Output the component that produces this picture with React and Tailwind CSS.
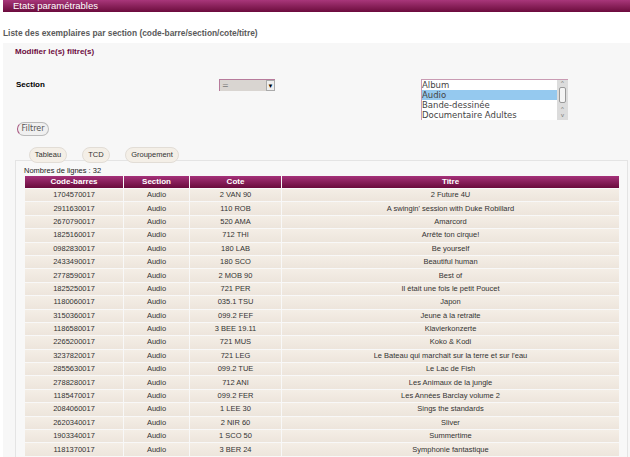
import React from 'react'

const rows = [
  ['1704570017', 'Audio', '2 VAN 90', '2 Future 4U'],
  ['2911630017', 'Audio', '110 ROB', "A swingin' session with Duke Robillard"],
  ['2670790017', 'Audio', '520 AMA', 'Amarcord'],
  ['1825160017', 'Audio', '712 THI', 'Arrête ton cirque!'],
  ['0982830017', 'Audio', '180 LAB', 'Be yourself'],
  ['2433490017', 'Audio', '180 SCO', 'Beautiful human'],
  ['2778590017', 'Audio', '2 MOB 90', 'Best of'],
  ['1825250017', 'Audio', '721 PER', 'Il était une fois le petit Poucet'],
  ['1180060017', 'Audio', '035.1 TSU', 'Japon'],
  ['3150360017', 'Audio', '099.2 FEF', 'Jeune à la retraite'],
  ['1186580017', 'Audio', '3 BEE 19.11', 'Klavierkonzerte'],
  ['2265200017', 'Audio', '721 MUS', 'Koko & Kodi'],
  ['3237820017', 'Audio', '721 LEG', "Le Bateau qui marchait sur la terre et sur l'eau"],
  ['2855630017', 'Audio', '099.2 TUE', 'Le Lac de Fish'],
  ['2788280017', 'Audio', '712 ANI', 'Les Animaux de la jungle'],
  ['1185470017', 'Audio', '099.2 FER', 'Les Années Barclay volume 2'],
  ['2084060017', 'Audio', '1 LEE 30', 'Sings the standards'],
  ['2620340017', 'Audio', '2 NIR 60', 'Sliver'],
  ['1903340017', 'Audio', '1 SCO 50', 'Summertime'],
  ['1181370017', 'Audio', '3 BER 24', 'Symphonie fantastique'],
]

const sections = ['Album', 'Audio', 'Bande-dessinée', 'Documentaire Adultes']

const tabs = [
  { label: 'Tableau', w: 'w-[38px]' },
  { label: 'TCD', w: 'w-[28px]' },
  { label: 'Groupement', w: 'w-[54px]' },
]

const App = () => {
  return (
    <div className="w-[630px] h-[457px] overflow-hidden bg-white pl-[3px] font-['Liberation_Sans',Arial,sans-serif]">
      {/* Title bar */}
      <div className="h-[12px] bg-gradient-to-b from-[#a8367a] to-[#6c0a3d] pl-[10px] text-[9.5px] leading-[12px] text-white">
        Etats paramétrables
      </div>

      <div className="mt-[16px] h-[15px] text-[8.4px] font-bold leading-[10px] text-[#5a5a5a]">
        Liste des exemplaires par section (code-barre/section/cote/titre)
      </div>

      {/* Filter panel */}
      <div className="bg-[#f7f7f7] pt-[4px]">
        <div className="pl-[12px] text-[8px] font-bold leading-[10px] text-[#6c0a3d]">
          Modifier le(s) filtre(s)
        </div>

        <div className="mt-[22px] flex items-start">
          <div className="w-[216px] pl-[13px] pt-[1px] text-[8px] font-bold leading-[10px] text-black">Section</div>
          <div className="flex h-[12px] w-[56px] border-l border-t border-[#b77b9b] bg-[#d9d5d1]">
            <span className="flex-1 pl-[2px] font-['DejaVu_Sans',sans-serif] text-[8px] leading-[11px] text-[#777]">=</span>
            <span className="flex w-[9px] items-center justify-center border border-[#aaa] bg-[#eee] text-[6px] leading-none text-black">▼</span>
          </div>
          <div className="ml-[146px] flex h-[41px] w-[147px] border-t border-l border-[#c99bb3] bg-white">
            <div className="flex-1">
              {sections.map((s) => (
                <div
                  key={s}
                  className={`h-[10px] font-['DejaVu_Sans',sans-serif] text-[8.5px] leading-[10px] text-[#444] ${s === 'Audio' ? 'bg-[#95c9ef]' : ''}`}
                >
                  {s}
                </div>
              ))}
            </div>
            <div className="flex w-[11px] flex-col items-center bg-[#dcdcdc] text-[6px] leading-[6px] text-[#777]">
              <span>^</span>
              <div className="mt-[1px] h-[16px] w-[7px] rounded-[2px] border border-[#999] bg-[#f4f4f4]" />
              <span className="mt-[3px]">^</span>
              <span>v</span>
            </div>
          </div>
        </div>

        <div className="mt-[2px] pl-[14px]">
          <div className="flex h-[14px] w-[32px] items-center justify-center rounded-full border border-[#bbb] border-l-[#a8557f] bg-[#f0f0f0] font-['DejaVu_Sans',sans-serif] text-[8px] text-[#555]">
            Filtrer
          </div>
        </div>

        {/* Tabs */}
        <div className="mt-[11px] flex gap-[15px] pl-[26px]">
          {tabs.map((t) => (
            <div
              key={t.label}
              className={`${t.w} flex h-[16px] items-center justify-center rounded-[8px] border border-[#e2ddd6] bg-[#f4efe7] text-[7.5px] text-[#333]`}
            >
              {t.label}
            </div>
          ))}
        </div>

        {/* Result box */}
        <div className="-mt-[3px] ml-[12px] w-[613px] border border-[#e4e4e4] bg-[#f8f8f8] pl-[8px] pt-[5px]">
          <div className="text-[7.5px] leading-[9px] text-[#222]">Nombres de lignes : 32</div>
          <table className="border-separate border-spacing-x-[1px] border-spacing-y-[1px] text-[7.5px] text-[#333]">
            <thead>
              <tr>
                {['Code-barres', 'Section', 'Cote', 'Titre'].map((h, i) => (
                  <th
                    key={h}
                    className={`${['w-[98px]', 'w-[65px]', 'w-[91px]', 'w-[337px]'][i]} h-[12px] bg-gradient-to-b from-[#a5317a] to-[#6a0a3c] p-0 text-[8px] font-bold leading-[12px] text-white`}
                  >
                    {h}
                  </th>
                ))}
              </tr>
            </thead>
            <tbody>
              {rows.map((r) => (
                <tr key={r[0]}>
                  {r.map((c, i) => (
                    <td key={i} className="h-[12.4px] bg-gradient-to-b from-[#f4eee6] to-[#ede5dc] p-0 text-center leading-[12px]">
                      {c}
                    </td>
                  ))}
                </tr>
              ))}
            </tbody>
          </table>
        </div>
      </div>
    </div>
  )
}

export default App
